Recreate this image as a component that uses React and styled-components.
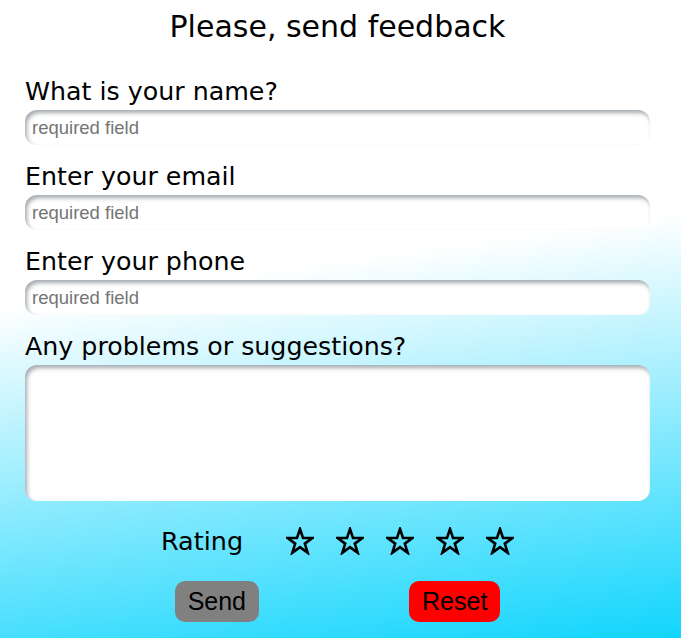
import React from "react";
import styled, { createGlobalStyle } from "styled-components";

const Global = createGlobalStyle`
  html, body { margin: 0; padding: 0; }
  body {
    min-height: 638px;
    background: linear-gradient(172deg, #ffffff 42%, #12d5fd 100%);
    font-family: "DejaVu Sans", sans-serif;
  }
`;

const Page = styled.div`
  min-height: 638px;
  box-sizing: border-box;
  padding: 10px 31px 0 25px;
  display: flex;
  flex-direction: column;
`;

const Title = styled.h1`
  margin: 0 0 34px;
  text-align: center;
  font-size: 30px;
  line-height: 34px;
  font-weight: 400;
  color: #000;
`;

const Group = styled.div`
  display: flex;
  flex-direction: column;
  margin-bottom: ${(p) => (p.$last ? "0" : "18px")};
`;

const Label = styled.label`
  font-size: 25.3px;
  line-height: 28px;
  color: #000;
  margin-bottom: 4px;
`;

const Input = styled.input`
  box-sizing: border-box;
  height: 35px;
  width: 100%;
  border: none;
  border-radius: 12px;
  background: #fff;
  box-shadow: inset 2px 3px 4px rgba(90, 100, 110, 0.55);
  padding: 0 7px;
  font-family: "Liberation Sans", Arial, sans-serif;
  font-size: 18.5px;
  outline: none;
  &::placeholder { color: #757575; }
`;

const TextArea = styled.textarea`
  box-sizing: border-box;
  height: 136px;
  width: 100%;
  border: none;
  border-radius: 12px;
  background: #fff;
  box-shadow: inset 2px 3px 4px rgba(90, 100, 110, 0.55);
  resize: none;
  outline: none;
`;

const RatingRow = styled.div`
  display: flex;
  align-items: center;
  justify-content: center;
  margin-top: 22px;
  height: 36px;
`;

const RatingLabel = styled.span`
  font-size: 25.5px;
  color: #000;
  margin-right: 43px;
`;

const Stars = styled.div`
  display: flex;
  gap: 22px;
`;

const StarBox = styled.span`
  display: block;
  width: 28px;
  height: 28px;
`;

const Buttons = styled.div`
  display: flex;
  justify-content: center;
  gap: 150px;
  margin-top: 22px;
`;

const Button = styled.button`
  height: 41px;
  border: none;
  border-radius: 10px;
  background: ${(p) => p.$bg};
  color: #000;
  font-family: "Liberation Sans", Arial, sans-serif;
  font-size: 25px;
  padding: 0 13px;
`;

const Star = () => (
  <StarBox>
    <svg width="28" height="28" viewBox="0 0 28 28">
      <polygon
        points="14,2 17,11 26.5,11 18.8,16.6 21.7,25.8 14,20.1 6.3,25.8 9.2,16.6 1.5,11 11,11"
        fill="none"
        stroke="#000"
        strokeWidth="2.6"
        strokeLinejoin="miter"
      />
    </svg>
  </StarBox>
);

export default function App() {
  return (
    <>
      <Global />
      <Page>
        <Title>Please, send feedback</Title>
        <Group>
          <Label>What is your name?</Label>
          <Input placeholder="required field" />
        </Group>
        <Group>
          <Label>Enter your email</Label>
          <Input placeholder="required field" />
        </Group>
        <Group>
          <Label>Enter your phone</Label>
          <Input placeholder="required field" />
        </Group>
        <Group $last>
          <Label>Any problems or suggestions?</Label>
          <TextArea />
        </Group>
        <RatingRow>
          <RatingLabel>Rating</RatingLabel>
          <Stars>
            <Star />
            <Star />
            <Star />
            <Star />
            <Star />
          </Stars>
        </RatingRow>
        <Buttons>
          <Button $bg="#808080">Send</Button>
          <Button $bg="#ff0000">Reset</Button>
        </Buttons>
      </Page>
    </>
  );
}
